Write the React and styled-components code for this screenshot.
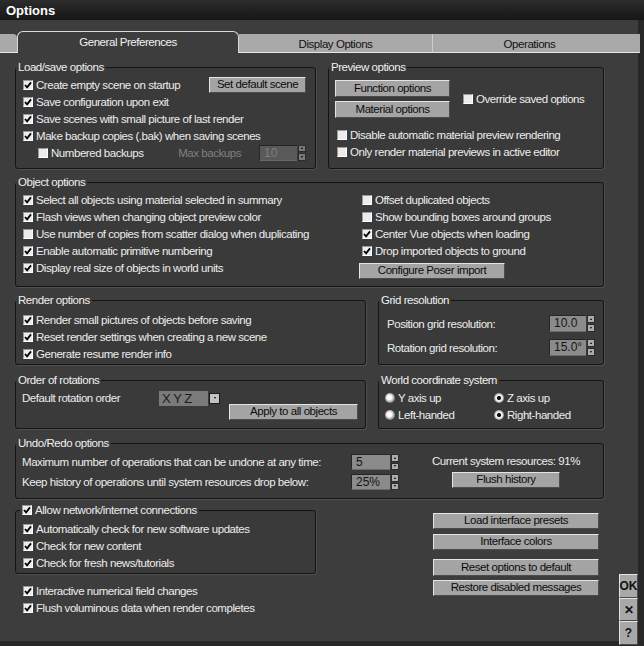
import React from "react";
import styled, { createGlobalStyle } from "styled-components";

const FONT = `"Liberation Sans", Arial, sans-serif`;

const GlobalStyle = createGlobalStyle`
  * { box-sizing: border-box; }
  html, body { margin: 0; padding: 0; background: #3d3d3d; }
  body {
    font-family: ${FONT};
    font-size: 11.5px;
    letter-spacing: -0.45px;
    color: #ededed;
  }
`;

export default function App() {
  return (
    <>
      <GlobalStyle />
      <Window>
        <TitleBar>Options</TitleBar>
        <TabBar>
          <TabStub />
          <ActiveTab>General Preferences</ActiveTab>
          <Tab $w={193}>Display Options</Tab>
          <Tab $sep $pr={14}>Operations</Tab>
        </TabBar>

        <Body>
          <Main>
            {/* load/save + preview */}
            <Row>
              <Group $w={301}>
                <Legend>Load/save options</Legend>
                <LoadSaveBody>
                  <Line>
                    <Check on>Create empty scene on startup</Check>
                    <Btn $w={97} $h={16}>Set default scene</Btn>
                  </Line>
                  <Check on>Save configuration upon exit</Check>
                  <Check on>Save scenes with small picture of last render</Check>
                  <Check on>Make backup copies (.bak) when saving scenes</Check>
                  <Line>
                    <Check indent={15}>Numbered backups</Check>
                    <DimLabel>Max backups</DimLabel>
                    <Spin value="10" w={38} h={16} dim />
                  </Line>
                </LoadSaveBody>
              </Group>

              <Group $w={276}>
                <Legend>Preview options</Legend>
                <PreviewBody>
                  <PreviewTop>
                    <BtnStack>
                      <Btn $w={115} $h={17}>Function options</Btn>
                      <Btn $w={115} $h={17}>Material options</Btn>
                    </BtnStack>
                    <Check>Override saved options</Check>
                  </PreviewTop>
                  <PreviewChecks>
                    <Check>Disable automatic material preview rendering</Check>
                    <Check>Only render material previews in active editor</Check>
                  </PreviewChecks>
                </PreviewBody>
              </Group>
            </Row>

            {/* object options */}
            <Group>
              <Legend>Object options</Legend>
              <ObjectBody>
                <Col>
                  <Check on>Select all objects using material selected in summary</Check>
                  <Check on>Flash views when changing object preview color</Check>
                  <Check>Use number of copies from scatter dialog when duplicating</Check>
                  <Check on>Enable automatic primitive numbering</Check>
                  <Check on>Display real size of objects in world units</Check>
                </Col>
                <Col>
                  <Check>Offset duplicated objects</Check>
                  <Check>Show bounding boxes around groups</Check>
                  <Check on>Center Vue objects when loading</Check>
                  <Check on>Drop imported objects to ground</Check>
                  <PoserBtn $w={146} $h={16}>Configure Poser import</PoserBtn>
                </Col>
              </ObjectBody>
            </Group>

            {/* render + grid */}
            <Row>
              <Group $w={351}>
                <Legend>Render options</Legend>
                <RenderBody>
                  <Check on>Render small pictures of objects before saving</Check>
                  <Check on>Reset render settings when creating a new scene</Check>
                  <Check on>Generate resume render info</Check>
                </RenderBody>
              </Group>
              <Group $w={226}>
                <Legend>Grid resolution</Legend>
                <GridBody>
                  <Line>
                    <FieldLabel>Position grid resolution:</FieldLabel>
                    <Spin value="10.0" w={37} h={17} />
                  </Line>
                  <Line>
                    <FieldLabel>Rotation grid resolution:</FieldLabel>
                    <Spin value="15.0°" w={37} h={17} />
                  </Line>
                </GridBody>
              </Group>
            </Row>

            {/* rotations + world */}
            <Row $mt={2}>
              <Group $w={351}>
                <Legend>Order of rotations</Legend>
                <OrderBody>
                  <OrderLine>
                    <OrderLabel>Default rotation order</OrderLabel>
                    <Drop>
                      <DropField>XYZ</DropField>
                      <DropBtn>
                        <Tri $down />
                      </DropBtn>
                    </Drop>
                  </OrderLine>
                  <ApplyBtn $w={129} $h={16}>Apply to all objects</ApplyBtn>
                </OrderBody>
              </Group>
              <Group $w={226}>
                <Legend>World coordinate system</Legend>
                <WorldBody>
                  <Radio>Y axis up</Radio>
                  <Radio on>Z axis up</Radio>
                  <Radio>Left-handed</Radio>
                  <Radio on>Right-handed</Radio>
                </WorldBody>
              </Group>
            </Row>

            {/* undo */}
            <Group $mt={1}>
              <Legend>Undo/Redo options</Legend>
              <UndoBody>
                <UndoGrid>
                  <FieldLabel>Maximum number of operations that can be undone at any time:</FieldLabel>
                  <Spin value="5" w={39} h={16} />
                  <FieldLabel>Keep history of operations until system resources drop below:</FieldLabel>
                  <Spin value="25%" w={39} h={16} />
                </UndoGrid>
                <Resources>
                  <ResText>Current system resources: 91%</ResText>
                  <Btn $w={108} $h={16}>Flush history</Btn>
                </Resources>
              </UndoBody>
            </Group>

            {/* bottom */}
            <BottomRow>
              <LeftStack>
                <Group $w={301}>
                  <Legend $check>
                    <Check on>Allow network/internet connections</Check>
                  </Legend>
                  <NetBody>
                    <Check on>Automatically check for new software updates</Check>
                    <Check on>Check for new content</Check>
                    <Check on>Check for fresh news/tutorials</Check>
                  </NetBody>
                </Group>
                <LooseChecks>
                  <Check on>Interactive numerical field changes</Check>
                  <Check on>Flush voluminous data when render completes</Check>
                </LooseChecks>
              </LeftStack>
              <SideButtons>
                <Btn $w={166} $h={16}>Load interface presets</Btn>
                <Btn $w={166} $h={16} $mt={5}>Interface colors</Btn>
                <Btn $w={166} $h={17} $mt={9}>Reset options to default</Btn>
                <Btn $w={166} $h={16} $mt={4}>Restore disabled messages</Btn>
              </SideButtons>
            </BottomRow>
          </Main>

          <Rail>
            <RailBtn $h={24}>OK</RailBtn>
            <RailBtn $h={23}>✕</RailBtn>
            <RailBtn $h={24}>?</RailBtn>
          </Rail>
        </Body>
      </Window>
    </>
  );
}

function Check({ on, children, indent }) {
  return (
    <CheckRow $indent={indent}>
      <Box>
        {on && (
          <svg width="8" height="8" viewBox="0 0 8 8">
            <path d="M1 4 L3.1 6.3 L7 1.4" fill="none" stroke="#000" strokeWidth="1.8" />
          </svg>
        )}
      </Box>
      <span>{children}</span>
    </CheckRow>
  );
}

function Radio({ on, children }) {
  return (
    <RadioRow>
      <RadioDot $on={on} />
      <span>{children}</span>
    </RadioRow>
  );
}

function Spin({ value, w, h, dim }) {
  return (
    <SpinWrap $h={h}>
      <SpinField $w={w} $h={h} $dim={dim}>{value}</SpinField>
      <SpinArrows>
        <SpinBtn $dim={dim}><Tri /></SpinBtn>
        <SpinBtn $dim={dim}><Tri $down /></SpinBtn>
      </SpinArrows>
    </SpinWrap>
  );
}

//WINDOW
const Window = styled.div`
  width: 644px;
  height: 646px;
  display: flex;
  flex-direction: column;
  background: #3d3d3d;
  overflow: hidden;
  box-shadow: inset -6px 0 0 #282828, inset 0 -5px 0 #282828;
`;

const TitleBar = styled.div`
  height: 20px;
  flex-shrink: 0;
  padding-left: 6px;
  background: linear-gradient(#2c2c2c, #161616);
  color: #ffffff;
  font-weight: bold;
  font-size: 13px;
  line-height: 21px;
  letter-spacing: 0;
`;

//TABS
const TabBar = styled.div`
  display: flex;
  align-items: flex-end;
  height: 22px;
  margin-top: 11px;
  padding-right: 4px;
  flex-shrink: 0;
`;

const TabStub = styled.div`
  width: 17px;
  height: 19px;
  background: #a9a9a9;
  border-bottom: 1px solid #e6e6e6;
  border-radius: 0 4px 0 0;
`;

const ActiveTab = styled.div`
  width: 222px;
  height: 22px;
  border: 1px solid #dadada;
  border-bottom: none;
  border-radius: 6px 6px 0 0;
  background: #3d3d3d;
  color: #f2f2f2;
  text-align: center;
  line-height: 21px;
`;

const Tab = styled.div`
  flex: ${p => (p.$w ? `0 0 ${p.$w}px` : 1)};
  height: 19px;
  padding: 1px ${p => p.$pr || 0}px 0 0;
  background: #a9a9a9;
  color: #111111;
  border-bottom: 1px solid #e6e6e6;
  border-left: ${p => (p.$sep ? "1px solid #cdcdcd" : "none")};
  text-align: center;
  line-height: 18px;
`;

//LAYOUT
const Body = styled.div`
  flex: 1;
  display: flex;
  min-height: 0;
`;

const Main = styled.div`
  width: 604px;
  padding: 7px 0 0 15px;
  display: flex;
  flex-direction: column;
  gap: 6px;
`;

const Row = styled.div`
  display: flex;
  gap: 12px;
  margin-top: ${p => p.$mt || 0}px;
`;

const Rail = styled.div`
  width: 19px;
  margin-left: 15px;
  display: flex;
  flex-direction: column;
  justify-content: flex-end;
  padding-bottom: 1px;
`;

const RailBtn = styled.div`
  height: ${p => p.$h}px;
  background: #a8a8a8;
  border: 1px solid;
  border-color: #e2e2e2 #4a4a4a #4a4a4a #e2e2e2;
  color: #111111;
  font-weight: bold;
  font-size: 12px;
  letter-spacing: 0;
  display: flex;
  align-items: center;
  justify-content: center;
`;

//GROUPS
const Group = styled.fieldset`
  margin: ${p => p.$mt || 0}px 0 0 0;
  padding: 0;
  min-width: 0;
  width: ${p => (p.$w ? `${p.$w}px` : "auto")};
  border: 1px solid #141414;
  border-radius: 3px;
  background: #3a3a3a;
  box-shadow: 1px 1px 0 #4f4f4f;
`;

const Legend = styled.legend`
  margin-left: ${p => (p.$check ? 4 : 0)}px;
  padding: 0 2px;
  height: 14px;
  line-height: 14px;
  color: #f0f0f0;
  display: flex;
  align-items: center;
`;

const LoadSaveBody = styled.div`
  padding: 2px 9px 7px 7px;
`;

const PreviewBody = styled.div`
  padding: 6px 6px 0 6px;
`;

const PreviewTop = styled.div`
  display: flex;
  align-items: center;
  gap: 13px;
`;

const BtnStack = styled.div`
  display: flex;
  flex-direction: column;
  gap: 4px;
`;

const PreviewChecks = styled.div`
  margin-top: 8px;
  padding-left: 2px;
`;

const ObjectBody = styled.div`
  display: grid;
  grid-template-columns: 339px 1fr;
  padding: 2px 0 7px 7px;
`;

const Col = styled.div`
  display: flex;
  flex-direction: column;
`;

const RenderBody = styled.div`
  padding: 4px 0 2px 7px;
`;

const GridBody = styled.div`
  display: flex;
  flex-direction: column;
  gap: 7px;
  padding: 8px;
`;

const OrderBody = styled.div`
  display: flex;
  flex-direction: column;
  padding: 3px 7px 8px 6px;
`;

const OrderLine = styled.div`
  display: flex;
  align-items: center;
  height: 16px;
`;

const OrderLabel = styled.span`
  width: 137px;
`;

const WorldBody = styled.div`
  display: grid;
  grid-template-columns: 109px 1fr;
  padding: 2px 0 0 6px;
`;

const UndoBody = styled.div`
  display: flex;
  align-items: flex-start;
  padding: 4px 0 8px 6px;
`;

const UndoGrid = styled.div`
  display: grid;
  grid-template-columns: 329px auto;
  row-gap: 4px;
  align-items: center;
`;

const Resources = styled.div`
  width: 144px;
  margin-left: 35px;
  display: flex;
  flex-direction: column;
  align-items: center;
  gap: 4px;
`;

const ResText = styled.span`
  line-height: 14px;
  white-space: nowrap;
`;

const NetBody = styled.div`
  padding: 3px 0 2px 7px;
`;

const BottomRow = styled.div`
  display: flex;
  margin-top: -2px;
`;

const LeftStack = styled.div`
  display: flex;
  flex-direction: column;
`;

const LooseChecks = styled.div`
  margin-top: 8px;
  padding-left: 8px;
`;

const SideButtons = styled.div`
  display: flex;
  flex-direction: column;
  margin-left: 117px;
  padding-top: 10px;
`;

//CONTROLS
const Line = styled.div`
  display: flex;
  align-items: center;
  justify-content: space-between;
`;

const CheckRow = styled.label`
  display: flex;
  align-items: center;
  gap: 3px;
  height: 17px;
  padding-left: ${p => p.$indent || 0}px;
  white-space: nowrap;
  color: #ededed;
`;

const Box = styled.span`
  width: 10px;
  height: 10px;
  flex-shrink: 0;
  display: inline-flex;
  align-items: center;
  justify-content: center;
  background: #ececec;
  border: 1px solid;
  border-color: #9a9a9a #ffffff #ffffff #9a9a9a;
`;

const RadioRow = styled.label`
  display: flex;
  align-items: center;
  gap: 3px;
  height: 17px;
  white-space: nowrap;
`;

const RadioDot = styled.span`
  width: 10px;
  height: 10px;
  border-radius: 50%;
  flex-shrink: 0;
  background: ${p =>
    p.$on
      ? "radial-gradient(circle, #111 0 1.6px, #f2f2f2 2.4px 3.2px, #8c8c8c 5px)"
      : "radial-gradient(circle at 45% 45%, #ffffff 0 2px, #d8d8d8 3.2px, #8a8a8a 5px)"};
`;

const Btn = styled.button`
  width: ${p => p.$w}px;
  height: ${p => p.$h}px;
  margin: ${p => (p.$mt ? `${p.$mt}px 0 0 0` : 0)};
  padding: 0;
  flex-shrink: 0;
  background: #a4a4a4;
  border: 1px solid;
  border-color: #e4e4e4 #4c4c4c #4c4c4c #e4e4e4;
  color: #0c0c0c;
  font-family: ${FONT};
  font-size: 11.5px;
  letter-spacing: -0.45px;
  line-height: 1;
  white-space: nowrap;
`;

const PoserBtn = styled(Btn)`
  margin: 4px 0 0 -3px;
`;

const ApplyBtn = styled(Btn)`
  align-self: flex-end;
  margin-top: -2px;
`;

const DimLabel = styled.span`
  margin-left: auto;
  margin-right: 18px;
  color: #808080;
`;

const FieldLabel = styled.span`
  white-space: nowrap;
`;

const SpinWrap = styled.div`
  display: flex;
  gap: 1px;
  height: ${p => p.$h}px;
`;

const SpinField = styled.div`
  width: ${p => p.$w}px;
  height: 100%;
  padding-left: 4px;
  background: ${p => (p.$dim ? "#595959" : "#8b8b8b")};
  color: ${p => (p.$dim ? "#7e7e7e" : "#141414")};
  border-top: 1px solid #262626;
  border-left: 1px solid #262626;
  border-bottom: 1px solid #6a6a6a;
  font-size: 12px;
  letter-spacing: 0;
  line-height: ${p => p.$h - 2}px;
`;

const SpinArrows = styled.div`
  width: 8px;
  display: flex;
  flex-direction: column;
  gap: 1px;
`;

const SpinBtn = styled.div`
  flex: 1;
  display: flex;
  align-items: center;
  justify-content: center;
  background: ${p => (p.$dim ? "#7a7a7a" : "#adadad")};
  border: 1px solid #2c2c2c;
`;

const Tri = styled.span`
  width: 0;
  height: 0;
  border-left: 1.5px solid transparent;
  border-right: 1.5px solid transparent;
  ${p => (p.$down ? "border-top: 2px solid #000;" : "border-bottom: 2px solid #000;")}
`;

const Drop = styled.div`
  display: flex;
  align-items: center;
  gap: 1px;
`;

const DropField = styled.div`
  width: 49px;
  height: 15px;
  padding-left: 3px;
  background: #7a7a7a;
  color: #1c1c1c;
  font-size: 13px;
  letter-spacing: 2.5px;
  line-height: 15px;
`;

const DropBtn = styled.div`
  width: 11px;
  height: 11px;
  display: flex;
  align-items: center;
  justify-content: center;
  background: #c2c2c2;
  border: 1px solid #1a1a1a;
`;
